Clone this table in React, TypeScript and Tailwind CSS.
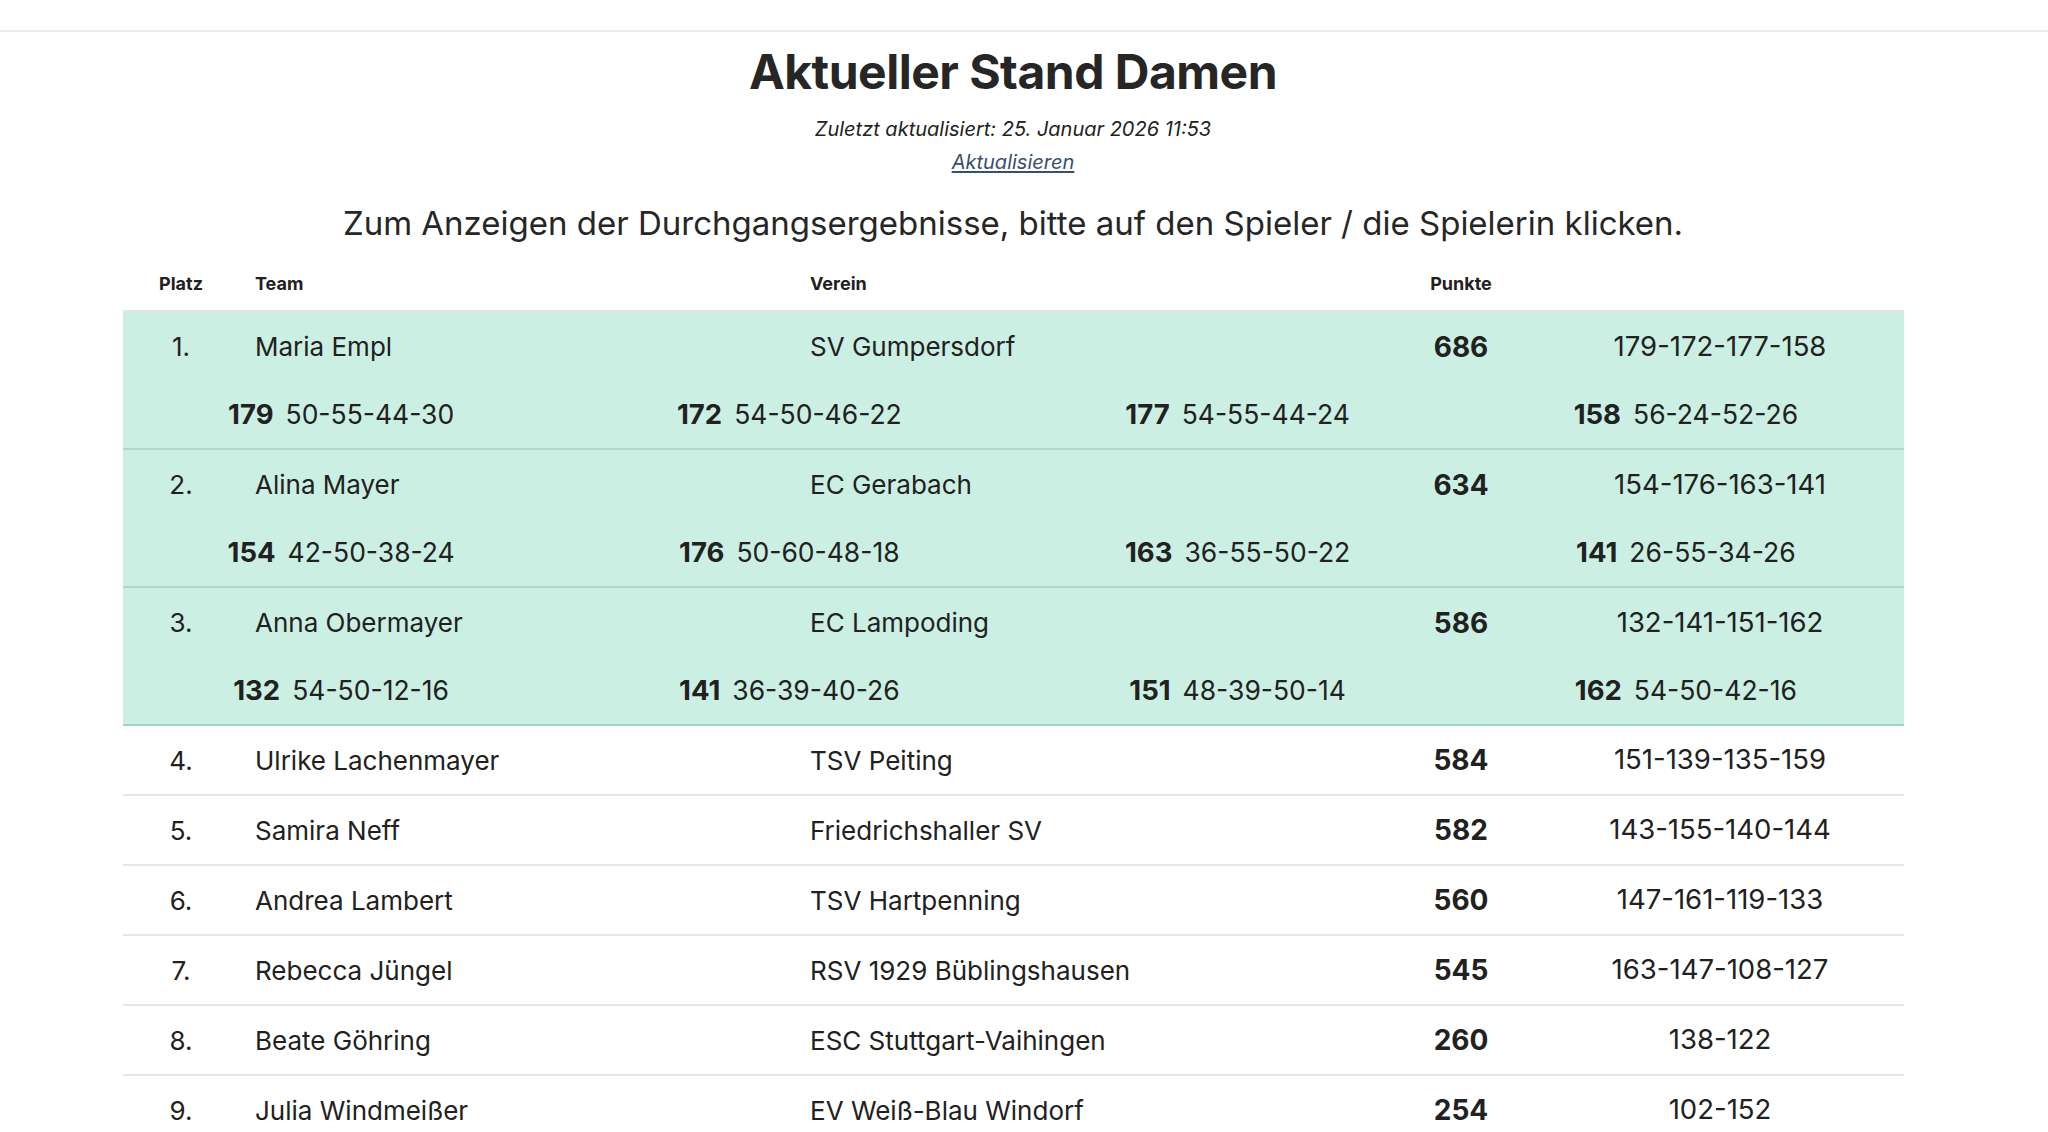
import React from "react";

type Row = {
  place: string;
  name: string;
  club: string;
  points: string;
  series: string;
  rounds?: [string, string][];
};

const rows: Row[] = [
  {
    place: "1.",
    name: "Maria Empl",
    club: "SV Gumpersdorf",
    points: "686",
    series: "179-172-177-158",
    rounds: [
      ["179", "50-55-44-30"],
      ["172", "54-50-46-22"],
      ["177", "54-55-44-24"],
      ["158", "56-24-52-26"],
    ],
  },
  {
    place: "2.",
    name: "Alina Mayer",
    club: "EC Gerabach",
    points: "634",
    series: "154-176-163-141",
    rounds: [
      ["154", "42-50-38-24"],
      ["176", "50-60-48-18"],
      ["163", "36-55-50-22"],
      ["141", "26-55-34-26"],
    ],
  },
  {
    place: "3.",
    name: "Anna Obermayer",
    club: "EC Lampoding",
    points: "586",
    series: "132-141-151-162",
    rounds: [
      ["132", "54-50-12-16"],
      ["141", "36-39-40-26"],
      ["151", "48-39-50-14"],
      ["162", "54-50-42-16"],
    ],
  },
  { place: "4.", name: "Ulrike Lachenmayer", club: "TSV Peiting", points: "584", series: "151-139-135-159" },
  { place: "5.", name: "Samira Neff", club: "Friedrichshaller SV", points: "582", series: "143-155-140-144" },
  { place: "6.", name: "Andrea Lambert", club: "TSV Hartpenning", points: "560", series: "147-161-119-133" },
  { place: "7.", name: "Rebecca Jüngel", club: "RSV 1929 Büblingshausen", points: "545", series: "163-147-108-127" },
  { place: "8.", name: "Beate Göhring", club: "ESC Stuttgart-Vaihingen", points: "260", series: "138-122" },
  { place: "9.", name: "Julia Windmeißer", club: "EV Weiß-Blau Windorf", points: "254", series: "102-152" },
];

function MainCells({ r }: { r: Row }) {
  return (
    <>
      <td className="h-[70px] px-4 text-center">{r.place}</td>
      <td className="px-4">{r.name}</td>
      <td className="px-4">{r.club}</td>
      <td className="px-4 text-center text-[28px] font-bold">{r.points}</td>
      <td className="px-4 text-center text-[27.5px]">{r.series}</td>
    </>
  );
}

export default function App() {
  return (
    <div className="min-h-screen bg-white text-[#212121]" style={{ fontFamily: "Inter, 'Noto Sans', sans-serif" }}>
      <div className="h-[32px] border-b-2 border-[#ececec]" />
      <div className="flex flex-col items-center pr-[22px]">
        <h1 className="mt-[16px] text-[48px] font-bold leading-[48px] tracking-[-0.5px] text-[#262626]">
          Aktueller Stand Damen
        </h1>
        <p className="mt-[21px] text-[20px] italic leading-[24px] text-[#222]">
          Zuletzt aktualisiert: 25. Januar 2026 11:53
        </p>
        <a href="#" className="mt-[9px] text-[20px] italic leading-[24px] text-[#3a4e6e] underline underline-offset-2">
          Aktualisieren
        </a>
        <p className="mt-[29px] text-[33px] leading-[40px] text-[#262626]">
          Zum Anzeigen der Durchgangsergebnisse, bitte auf den Spieler / die Spielerin klicken.
        </p>
      </div>
      <div className="ml-[123px] mt-[14px] w-[1781px]">
        <table className="w-full table-fixed border-collapse text-[26px]">
          <colgroup>
            <col className="w-[116px]" />
            <col className="w-[555px]" />
            <col className="w-[592px]" />
            <col className="w-[150px]" />
            <col className="w-[368px]" />
          </colgroup>
          <thead>
            <tr className="border-b-2 border-[#e4e4e4] text-[18px] font-bold">
              <th className="h-[54px] px-4 text-center">Platz</th>
              <th className="px-4 text-left">Team</th>
              <th className="px-4 text-left">Verein</th>
              <th className="px-4 text-center">Punkte</th>
              <th className="px-4" />
            </tr>
          </thead>
          <tbody>
            {rows.map((r) =>
              r.rounds ? (
                <React.Fragment key={r.place}>
                  <tr className="bg-[#cbf0e3]">
                    <MainCells r={r} />
                  </tr>
                  <tr
                    className={
                      r.place === "3."
                        ? "border-b-2 border-[#9fd5c0] bg-[#cbf0e3]"
                        : "border-b-2 border-[#acdac8] bg-[#cbf0e3]"
                    }
                  >
                    <td colSpan={5} className="h-[68px] p-0">
                      <div className="-mx-[6px] grid grid-cols-4">
                        {r.rounds.map(([t, d], i) => (
                          <div key={i} className="text-center text-[26.5px]">
                            <span className="mr-[12px] text-[27.5px] font-bold">{t}</span>
                            {d}
                          </div>
                        ))}
                      </div>
                    </td>
                  </tr>
                </React.Fragment>
              ) : (
                <tr key={r.place} className="border-b-2 border-[#e5e7eb]">
                  <MainCells r={r} />
                </tr>
              )
            )}
          </tbody>
        </table>
      </div>
    </div>
  );
}
